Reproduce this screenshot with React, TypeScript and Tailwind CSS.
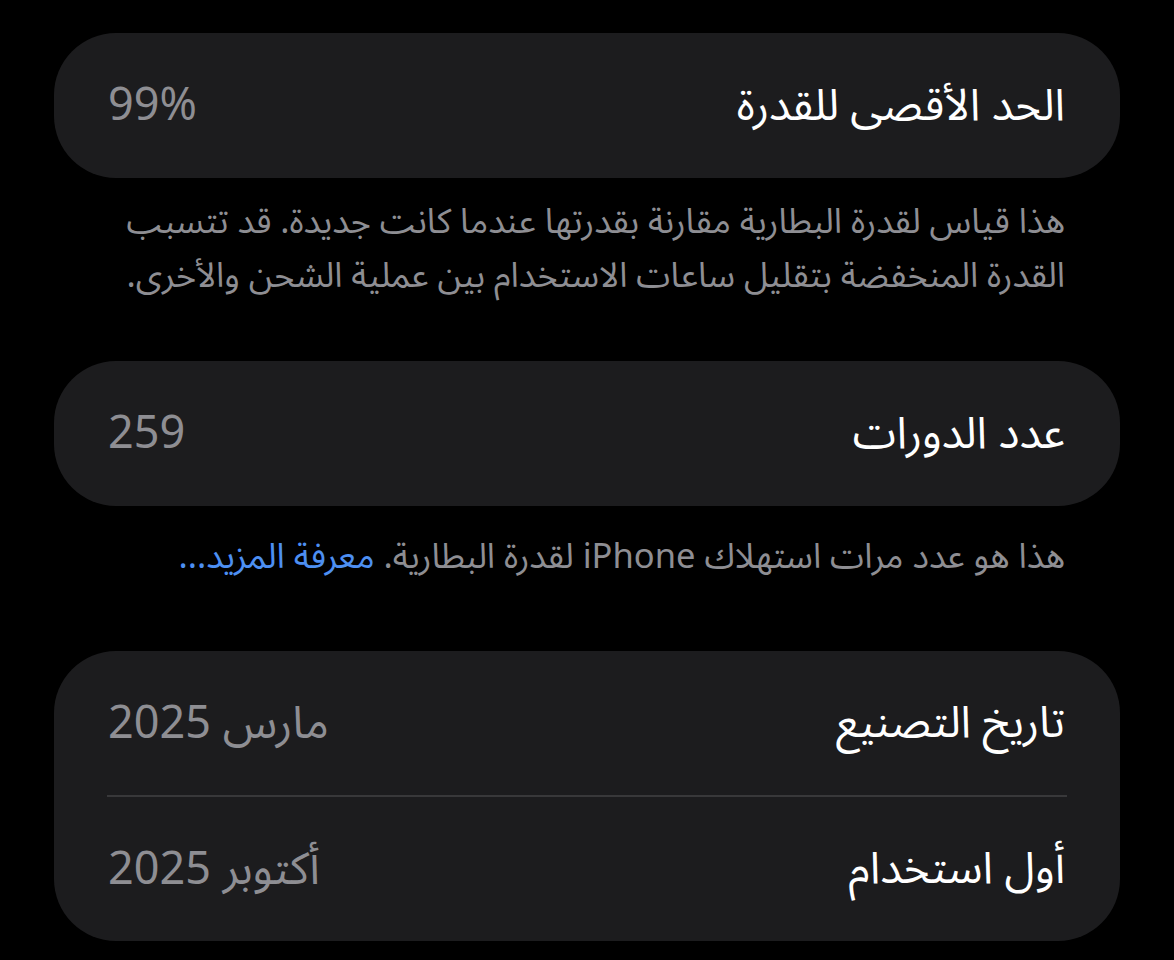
import React from "react";

const arabic = { fontFamily: '"Noto Sans Arabic", "Noto Sans", "DejaVu Sans", sans-serif' };

function Row({ label, value, h = "h-[145px]" }: { label: string; value: string; h?: string }) {
  return (
    <div className={`flex ${h} items-center justify-between pl-[54px] pr-[55px]`}>
      <span className="text-[44px] leading-none text-white">{label}</span>
      <span className="text-[45px] leading-none text-[#8e8e93]">{value}</span>
    </div>
  );
}

export default function App() {
  return (
    <div dir="rtl" className="min-h-[960px] w-[1174px] bg-black pt-[33px] pb-[19px]" style={arabic}>
      <div className="mx-[54px] rounded-[62px] bg-[#1c1c1e]">
        <Row label="الحد الأقصى للقدرة" value="99%" />
      </div>
      <p className="mt-[17px] pl-[60px] pr-[109px] text-[34.5px] leading-[54px] whitespace-nowrap text-[#8e8e93]">
        هذا قياس لقدرة البطارية مقارنة بقدرتها عندما كانت جديدة. قد تتسبب
        <br />
        القدرة المنخفضة بتقليل ساعات الاستخدام بين عملية الشحن والأخرى.
      </p>
      <div className="mx-[54px] mt-[58px] rounded-[62px] bg-[#1c1c1e]">
        <Row label="عدد الدورات" value="259" />
      </div>
      <p className="mt-[24px] pl-[60px] pr-[109px] text-[34.5px] leading-[54px] whitespace-nowrap text-[#8e8e93]">
        هذا هو عدد مرات استهلاك iPhone لقدرة البطارية. <span className="text-[#4d8ff2]">معرفة المزيد...</span>
      </p>
      <div className="mx-[54px] mt-[67px] rounded-[62px] bg-[#1c1c1e]">
        <Row label="تاريخ التصنيع" value="مارس 2025" h="h-[144px]" />
        <div className="mx-[53px] h-[2px] bg-[#38383a]" />
        <Row label="أول استخدام" value="أكتوبر 2025" h="h-[144px]" />
      </div>
    </div>
  );
}
